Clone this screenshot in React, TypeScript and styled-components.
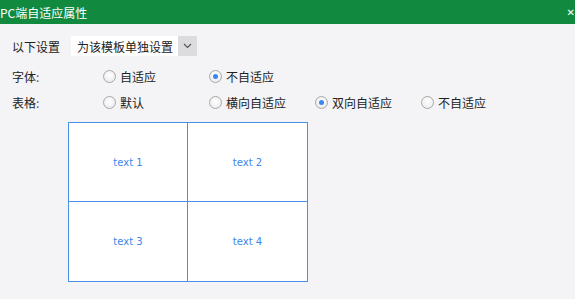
import React from 'react'
import styled, { createGlobalStyle } from 'styled-components'

const Global = createGlobalStyle`
  html, body {
    margin: 0;
    padding: 0;
    background: #f4f4f6;
  }
  body {
    font-family: "Microsoft YaHei", "Noto Sans CJK SC", "Noto Sans", sans-serif;
    font-size: 12px;
    color: #222;
  }
`

const Dialog = styled.div`
  width: 575px;
  height: 299px;
  overflow: hidden;
  background: #f4f4f6;
`

const TitleBar = styled.div`
  height: 24px;
  background: #118a3f;
  color: #fff;
  display: flex;
  align-items: center;
  justify-content: space-between;
  font-size: 12px;
`

const Close = styled.span`
  font-family: "DejaVu Sans", sans-serif;
  font-size: 10px;
  margin-right: 0;
  color: #fff;
`

const Body = styled.div`
  padding: 12px 0 0 12px;
`

const SettingRow = styled.div`
  display: flex;
  align-items: center;
  height: 20px;
  gap: 11px;
  font-size: 12px;
`

const Select = styled.div`
  display: flex;
  height: 20px;
  background: #fff;
  align-items: center;
  white-space: nowrap;
`

const SelectText = styled.span`
  padding: 0 0 0 6px;
  width: 101px;
`

const SelectArrow = styled.span`
  width: 19px;
  height: 20px;
  background: #dcdcdf;
  display: flex;
  align-items: center;
  justify-content: center;
`

const OptionRow = styled.div<{ $top: number }>`
  display: grid;
  grid-template-columns: 91px repeat(4, 106px);
  align-items: center;
  height: 20px;
  margin-top: ${p => p.$top}px;
  white-space: nowrap;
`

const Label = styled.span`
  color: #222;
`

const Colon = styled.span`
  color: #6b3f7a;
`

const Option = styled.label`
  display: flex;
  align-items: center;
  gap: 4px;
`

const Radio = styled.span<{ $checked?: boolean }>`
  width: 11px;
  height: 11px;
  border-radius: 50%;
  border: 1px solid #a8a8a8;
  background: radial-gradient(circle at 50% 40%, #ffffff 0%, #eeeeee 70%, #dddddd 100%);
  display: flex;
  align-items: center;
  justify-content: center;
  box-sizing: content-box;

  &::after {
    content: '';
    display: ${p => (p.$checked ? 'block' : 'none')};
    width: 5px;
    height: 5px;
    border-radius: 50%;
    background: #3b86f0;
  }
`

const Table = styled.div`
  margin: 10px 0 0 56px;
  width: 238px;
  height: 158px;
  border: 1px solid #4a8fea;
  display: grid;
  grid-template-columns: 118px 120px;
  grid-template-rows: 78px 80px;
  background: #fff;
`

const Cell = styled.div<{ $right?: boolean; $bottom?: boolean }>`
  display: flex;
  align-items: center;
  justify-content: center;
  font-family: "DejaVu Sans", "Liberation Sans", sans-serif;
  font-size: 10px;
  color: #3d86ea;
  border-left: ${p => (p.$right ? '1px solid #4a8fea' : 'none')};
  border-top: ${p => (p.$bottom ? '1px solid #4a8fea' : 'none')};
`

const RadioOption: React.FC<{ text: string; checked?: boolean }> = ({ text, checked }) => (
  <Option>
    <Radio $checked={checked} />
    {text}
  </Option>
)

const App: React.FC = () => {
  return (
    <Dialog>
      <Global />
      <TitleBar>
        <span>PC端自适应属性</span>
        <Close>✕</Close>
      </TitleBar>
      <Body>
        <SettingRow>
          <span>以下设置</span>
          <Select>
            <SelectText>为该模板单独设置</SelectText>
            <SelectArrow>
              <svg width="9" height="6" viewBox="0 0 9 6">
                <path d="M1 1 L4.5 4.5 L8 1" fill="none" stroke="#555" strokeWidth="1.2" />
              </svg>
            </SelectArrow>
          </Select>
        </SettingRow>
        <OptionRow $top={10}>
          <Label>
            字体<Colon>:</Colon>
          </Label>
          <RadioOption text="自适应" />
          <RadioOption text="不自适应" checked />
        </OptionRow>
        <OptionRow $top={6}>
          <Label>
            表格<Colon>:</Colon>
          </Label>
          <RadioOption text="默认" />
          <RadioOption text="横向自适应" />
          <RadioOption text="双向自适应" checked />
          <RadioOption text="不自适应" />
        </OptionRow>
        <Table>
          <Cell>text 1</Cell>
          <Cell $right>text 2</Cell>
          <Cell $bottom>text 3</Cell>
          <Cell $right $bottom>text 4</Cell>
        </Table>
      </Body>
    </Dialog>
  )
}

export default App
